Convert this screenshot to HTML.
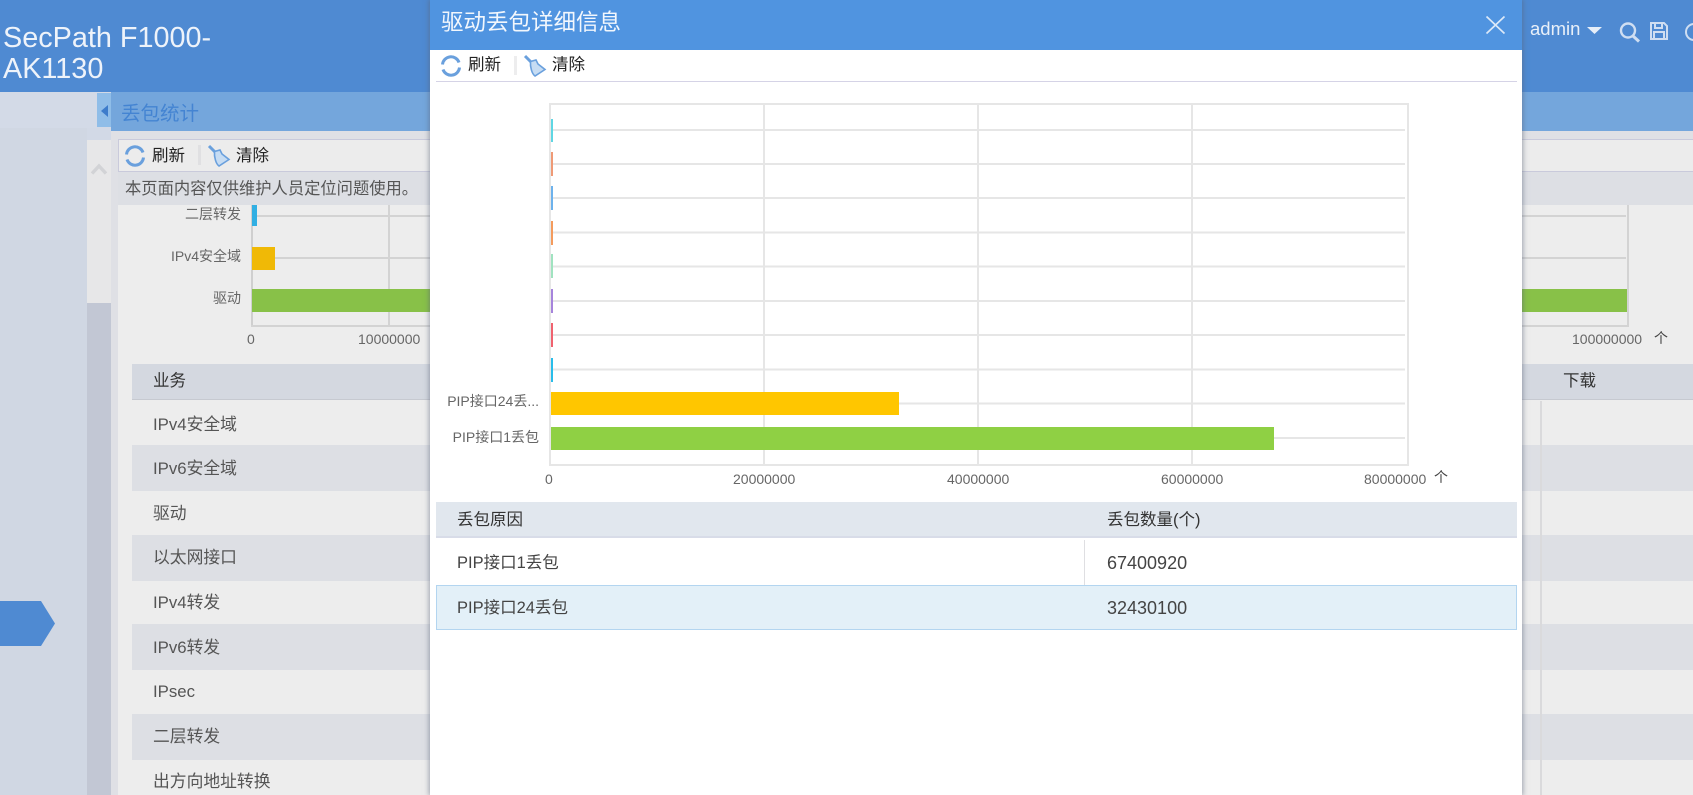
<!DOCTYPE html>
<html lang="zh-CN">
<head>
<meta charset="utf-8">
<title>丢包统计</title>
<style>
html,body{margin:0;padding:0;width:1693px;height:795px;overflow:hidden;background:#ededed}
body{position:relative;font-family:"Liberation Sans","Noto Sans CJK SC",sans-serif;color:#555}
.a,.t{position:absolute}
.t{white-space:nowrap;line-height:1}
.r{text-align:right}
svg{position:absolute;overflow:visible}
.row{position:absolute;left:132px;width:1561px}
.ax{font-size:14px;color:#666}
.b{font-size:16.8px}
</style>
</head>
<body>
<!-- page header -->
<div class="a" style="left:0;top:0;width:1693px;height:92px;background:#4f8ad2"></div>
<div class="t" style="left:3px;top:23px;font-size:28.8px;line-height:31px;color:#eef3fa;white-space:normal;width:220px">SecPath F1000-<br>AK1130</div>
<div class="t" style="left:1530px;top:20px;font-size:18.500px;color:#e9f0f9">admin</div>
<svg style="left:1587px;top:27px" width="15" height="7"><path d="M0 0H15L7.5 7Z" fill="#e6eef8"/></svg>
<svg style="left:1619px;top:22px" width="22" height="20" fill="none" stroke="#cfdef2" stroke-width="2.4"><circle cx="9" cy="8.5" r="7"/><path d="M14 14l6 5.5" stroke-width="3"/></svg>
<svg style="left:1650px;top:22px" width="18" height="18" fill="none" stroke="#cfdef2" stroke-width="2"><path d="M1 1H14L17 4V17H1Z"/><path d="M5 1V6H12V1M4 17V10H14V17"/></svg>
<svg style="left:1685px;top:23px" width="20" height="20" fill="none" stroke="#cfdef2" stroke-width="2"><circle cx="9" cy="9" r="8"/><path d="M9 4v5l3 2"/></svg>

<!-- sidebar -->
<div class="a" style="left:0;top:92px;width:87px;height:703px;background:#d0d7e3"></div>
<div class="a" style="left:87px;top:92px;width:24px;height:48px;background:#d2d9e6"></div>
<div class="a" style="left:0;top:92px;width:97px;height:36px;background:#d3dae7"></div>
<div class="a" style="left:87px;top:140px;width:24px;height:163px;background:#e7e7e8"></div>
<div class="a" style="left:87px;top:303px;width:24px;height:492px;background:#c2c7d4"></div>
<svg style="left:91px;top:163px" width="16" height="12" fill="none" stroke="#d2d3d6" stroke-width="3.4"><path d="M1 10.5L8 3l7 7.5"/></svg>
<div class="a" style="left:97px;top:93px;width:14px;height:34px;background:#8fbde8"></div>
<svg style="left:101px;top:105px" width="7" height="12"><path d="M7 0V12L0 6Z" fill="#3d7ccb"/></svg>
<div class="a" style="left:0;top:601px;width:41px;height:45px;background:#4f8ad2"></div>
<svg style="left:41px;top:601px" width="14" height="45"><path d="M0 0L14 22.5L0 45Z" fill="#4f8ad2"/></svg>

<!-- content header -->
<div class="a" style="left:111px;top:92px;width:1582px;height:39px;background:#74a6dc"></div>
<div class="t" style="left:121px;top:105px;font-size:19.5px;color:#4484d2">丢包统计</div>
<div class="a" style="left:111px;top:131px;width:1582px;height:664px;background:#dfe0e5"></div>
<div class="a" style="left:118px;top:139px;width:1575px;height:33px;background:#ececec;border:1px solid #c9cadb;border-right:0;box-sizing:border-box"></div>
<svg style="left:125px;top:146px" width="20" height="20" fill="none" stroke="#6aa0dd" stroke-width="3"><path d="M1.500 8.500A8.500 8.500 0 0 1 18 6.500"/><path d="M18.500 11.500A8.500 8.500 0 0 1 2 13.500"/></svg>
<div class="t" style="left:152px;top:148px;font-size:16.5px;color:#222">刷新</div>
<div class="a" style="left:198px;top:145px;width:3px;height:20px;background:#e0e0e2"></div>
<svg style="left:208px;top:145px" width="22" height="22" fill="none" stroke="#6aa0dd" stroke-width="1.6"><path d="M1 1L8 8" stroke-width="3"/><path d="M6.5 6.5L12 5 14 9 21 14.5 11 21C8 19 6 12 6.5 6.5Z" fill="#c6dcf3"/></svg>
<div class="t" style="left:236px;top:148px;font-size:16.5px;color:#222">清除</div>
<div class="a" style="left:118px;top:172px;width:1575px;height:33px;background:#dddfe4"></div>
<div class="t" style="left:125px;top:181px;font-size:16.3px;color:#555">本页面内容仅供维护人员定位问题使用。</div>

<!-- background chart -->
<div class="a" style="left:118px;top:205px;width:1575px;height:590px;background:#ededed"></div>
<div class="a" style="left:252px;top:215px;width:1374px;height:2px;background:#d3d3d3"></div>
<div class="a" style="left:252px;top:257px;width:1374px;height:2px;background:#d3d3d3"></div>
<div class="a" style="left:388px;top:205px;width:2px;height:120px;background:#d3d3d3"></div>
<div class="a" style="left:251px;top:205px;width:2px;height:122px;background:#cfcfcf"></div>
<div class="a" style="left:1627px;top:205px;width:2px;height:122px;background:#d3d3d3"></div>
<div class="a" style="left:251px;top:325px;width:1378px;height:2px;background:#d3d3d3"></div>
<div class="a" style="left:252px;top:205px;width:5px;height:21px;background:#31afe3"></div>
<div class="a" style="left:252px;top:247px;width:23px;height:23px;background:#f0b906"></div>
<div class="a" style="left:252px;top:289px;width:1375px;height:23px;background:#88c148"></div>
<div class="t r ax" style="right:1452px;top:207px">二层转发</div>
<div class="t r ax" style="right:1452px;top:249px">IPv4安全域</div>
<div class="t r ax" style="right:1452px;top:291px">驱动</div>
<div class="t ax" style="left:247px;top:332px">0</div>
<div class="t ax" style="left:358px;top:332px">10000000</div>
<div class="t ax" style="left:1572px;top:332px">100000000</div>
<div class="t" style="left:1654px;top:331px;font-size:14px;color:#444">个</div>

<!-- background table -->
<div class="row" style="top:364px;height:36px;background:#d4d8e0;border-bottom:1px solid #c6c9d0;box-sizing:border-box"></div>
<div class="row" style="top:445px;height:46px;background:#dddfe4"></div>
<div class="row" style="top:535px;height:46px;background:#dddfe4"></div>
<div class="row" style="top:624px;height:46px;background:#dddfe4"></div>
<div class="row" style="top:714px;height:46px;background:#dddfe4"></div>
<div class="a" style="left:1540px;top:401px;width:2px;height:394px;background:#dadadc"></div>
<div class="t" style="left:153px;top:373px;font-size:16.5px;color:#333">业务</div>
<div class="t" style="left:1563px;top:373px;font-size:16.5px;color:#333">下载</div>
<div class="t b" style="left:153px;top:417px">IPv4安全域</div>
<div class="t b" style="left:153px;top:461px">IPv6安全域</div>
<div class="t b" style="left:153px;top:506px">驱动</div>
<div class="t b" style="left:153px;top:550px">以太网接口</div>
<div class="t b" style="left:153px;top:595px">IPv4转发</div>
<div class="t b" style="left:153px;top:640px">IPv6转发</div>
<div class="t b" style="left:153px;top:684px">IPsec</div>
<div class="t b" style="left:153px;top:729px">二层转发</div>
<div class="t b" style="left:153px;top:774px">出方向地址转换</div>

<!-- modal -->
<div class="a" style="left:430px;top:0;width:1092px;height:795px;background:#fff;box-shadow:0 0 5px 1px rgba(90,100,120,.55)"></div>
<div class="a" style="left:430px;top:0;width:1092px;height:50px;background:#5094e0"></div>
<div class="t" style="left:441px;top:10px;font-size:22.5px;line-height:1.15;color:#f2f7fd">驱动丢包详细信息</div>
<svg style="left:1486px;top:16px" width="19" height="18" fill="none" stroke="#dce9f8" stroke-width="1.7"><path d="M.5 .5L18.5 17.5M18.5 .5L.5 17.5"/></svg>
<svg style="left:441px;top:56px" width="20" height="20" fill="none" stroke="#6aa0dd" stroke-width="3"><path d="M1.500 8.500A8.500 8.500 0 0 1 18 6.500"/><path d="M18.500 11.500A8.500 8.500 0 0 1 2 13.500"/></svg>
<div class="t" style="left:468px;top:57px;font-size:16.5px;color:#222">刷新</div>
<div class="a" style="left:514px;top:56px;width:3px;height:19px;background:#ededee"></div>
<svg style="left:524px;top:55px" width="22" height="22" fill="none" stroke="#6aa0dd" stroke-width="1.6"><path d="M1 1L8 8" stroke-width="3"/><path d="M6.5 6.5L12 5 14 9 21 14.5 11 21C8 19 6 12 6.5 6.5Z" fill="#c6dcf3"/></svg>
<div class="t" style="left:552px;top:57px;font-size:16.5px;color:#222">清除</div>
<div class="a" style="left:436px;top:81px;width:1081px;height:1px;background:#d5d3e6"></div>

<!-- modal chart -->
<svg style="left:0;top:0" width="1693" height="795">
<g fill="none" stroke="#e6e6e6" stroke-width="2">
<path d="M764 104V465M978 104V465M1192 104V465"/>
<path d="M551 130H1405M551 164H1405M551 198H1405M551 232.500H1405M551 266.500H1405M551 301H1405M551 335H1405M551 369.500H1405M551 403.500H1405M551 438H1405"/>
<rect x="550" y="104" width="858" height="361"/>
</g>
<rect x="551" y="119" width="2" height="23" fill="#5fd6e3"/>
<rect x="551" y="152" width="2" height="24" fill="#ef9a76"/>
<rect x="551" y="186" width="2" height="24" fill="#6db2ec"/>
<rect x="551" y="221" width="2" height="24" fill="#f49b5d"/>
<rect x="551" y="254" width="2" height="24" fill="#a0e3c0"/>
<rect x="551" y="289" width="2" height="24" fill="#a684dc"/>
<rect x="551" y="323" width="2" height="24" fill="#f0626f"/>
<rect x="551" y="358" width="2" height="24" fill="#29bdea"/>
<rect x="551" y="392" width="348" height="23" fill="#ffc600"/>
<rect x="551" y="427" width="723" height="23" fill="#8fd044"/>
</svg>
<div class="t r ax" style="right:1154px;top:394px">PIP接口24丢...</div>
<div class="t r ax" style="right:1154px;top:430px">PIP接口1丢包</div>
<div class="t ax" style="left:545px;top:472px">0</div>
<div class="t ax" style="left:733px;top:472px">20000000</div>
<div class="t ax" style="left:947px;top:472px">40000000</div>
<div class="t ax" style="left:1161px;top:472px">60000000</div>
<div class="t ax" style="left:1364px;top:472px">80000000</div>
<div class="t" style="left:1434px;top:470px;font-size:14px;color:#444">个</div>

<!-- modal table -->
<div class="a" style="left:436px;top:502px;width:1081px;height:36px;background:#e1e7ee;border-bottom:2px solid #d8dce8;box-sizing:border-box"></div>
<div class="t" style="left:457px;top:512px;font-size:16.5px;color:#333">丢包原因</div>
<div class="t" style="left:1107px;top:512px;font-size:16.5px;color:#333">丢包数量(个)</div>
<div class="a" style="left:1084px;top:540px;width:1px;height:45px;background:#dfdfe2"></div>
<div class="t" style="left:457px;top:555px;font-size:16.5px;color:#444">PIP接口1丢包</div>
<div class="t" style="left:1107px;top:554px;font-size:18px;color:#444">67400920</div>
<div class="a" style="left:436px;top:585px;width:1081px;height:45px;background:#e3f0f8;border:1px solid #b3d5f0;box-sizing:border-box"></div>
<div class="t" style="left:457px;top:600px;font-size:16.5px;color:#444">PIP接口24丢包</div>
<div class="t" style="left:1107px;top:599px;font-size:18px;color:#444">32430100</div>
</body>
</html>
